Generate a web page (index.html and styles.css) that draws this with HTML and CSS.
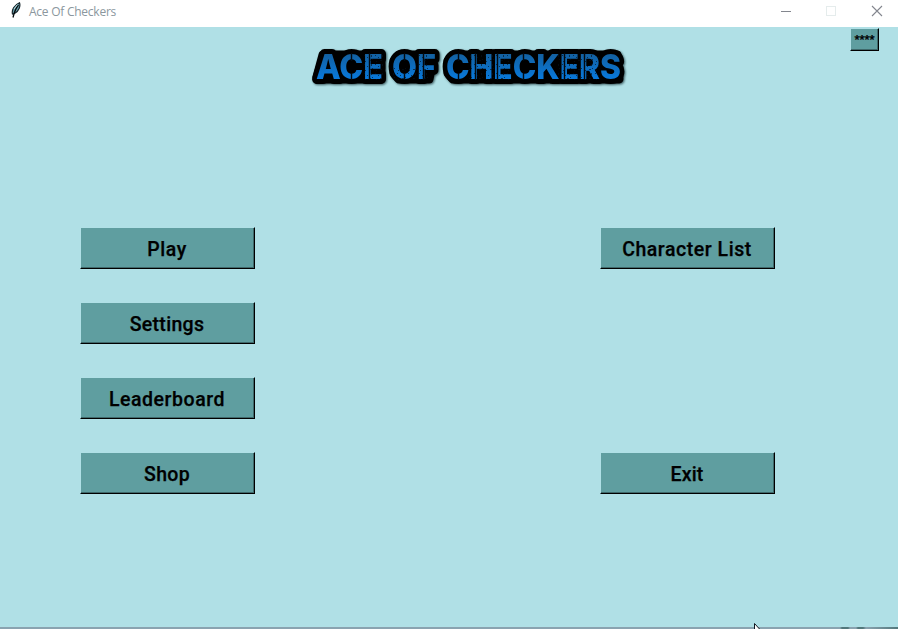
FILE: index.html
```html
<!DOCTYPE html>
<html lang="en">
<head>
<meta charset="utf-8">
<title>Ace Of Checkers</title>
<link rel="stylesheet" href="styles.css">
</head>
<body>
<header class="titlebar">
  <svg class="feather" width="12" height="17" viewBox="0 0 12 17">
    <path d="M2.500 12C1.500 8 4 3 9.500 .7C10.700 4 9 9 4.500 11.500Z" fill="#679da9" stroke="#17252b" stroke-width="1.2"/>
    <path d="M8.500 3Q5 7 3 15.500" fill="none" stroke="#050b0e" stroke-width="1.300"/>
    <path d="M4 7L7.500 2.500" stroke="#b6dce2"/>
  </svg>
  <span class="caption">Ace Of Checkers</span>
  <svg class="controls" width="106" height="14" viewBox="0 0 106 14" fill="none">
    <path d="M1 7.500H11" stroke="#83868e"/>
    <rect x="46.500" y="2.500" width="9" height="9" stroke="#e5ecec"/>
    <path d="M92 2L102 12M102 2L92 12" stroke="#83868e" stroke-width="1.100"/>
  </svg>
</header>
<main class="window">
  <svg class="logo" width="330" height="50" viewBox="305 42 330 50">
    <defs>
      <linearGradient id="blue" x1="0" y1="54" x2="0" y2="79" gradientUnits="userSpaceOnUse">
        <stop offset="0" stop-color="#1360a0"/><stop offset="1" stop-color="#0879dc"/>
      </linearGradient>
      <pattern id="grit" width="11" height="9" patternUnits="userSpaceOnUse">
        <path d="M1 1h1v1h-1zM4 3h1v1h-1zM8 1h1v2h-1zM6 6h2v1h-2zM2 7h1v1h-1zM9 5h1v1h-1z" fill="#04111c" opacity=".65"/>
      </pattern>
    </defs>
    <g class="logo-text">
      <path class="outline" d="M323 55H381V79H318L317 77ZM399 55H434L429 79H399L394 73V61ZM453 55H617L619 79H453L448 73V61Z"/>
      <g class="letters">
        <text x="316" y="79" textLength="67" lengthAdjust="spacingAndGlyphs">ACE</text>
        <text x="392" y="79" textLength="44" lengthAdjust="spacingAndGlyphs">OF</text>
        <text x="446" y="79" textLength="175" lengthAdjust="spacingAndGlyphs">CHECKERS</text>
      </g>
    </g>
    <path class="cuts" d="M351.500 53V61M351.500 73V80M369.500 53V80M404.500 53V61M404.500 73V80M423.500 53V80M458.500 53V61M458.500 73V80M475.500 53V80M497.500 53V80M523.500 53V61M523.500 73V80M564.500 53V80M584.500 53V80"/>
    <path d="M363 54H383V80H363ZM393 68H416V80H393ZM417 54H430V80H417ZM469 54H510V80H469ZM558 54H599V80H558Z" fill="url(#grit)"/>
  </svg>
  <button class="key key-small">****</button>
  <nav class="menu">
    <button class="key play">Play</button>
    <button class="key list">Character List</button>
    <button class="key settings">Settings</button>
    <button class="key board">Leaderboard</button>
    <button class="key shop">Shop</button>
    <button class="key exit">Exit</button>
  </nav>
</main>
<footer class="edge"></footer>
<svg class="cursor" width="12" height="19" viewBox="0 0 12 19"><path d="M.5 .5V16L4 12.500L7 18L9 17L6.500 12H11Z" fill="#fff" stroke="#101820"/></svg>
</body>
</html>
```
FILE: styles.css
```css
* { box-sizing: border-box; }
html, body { margin: 0; height: 629px; overflow: hidden; }
body {
  display: flex;
  flex-direction: column;
  position: relative;
  background: #b0e0e6;
  font-family: Roboto, "Liberation Sans", sans-serif;
}
.titlebar {
  flex: 0 0 27px;
  display: flex;
  align-items: flex-start;
  padding: 0 12px 0 10px;
  background: #fff;
}
.feather { margin-top: 2px; }
.caption {
  margin-left: 7px;
  font: 12px/24px "Open Sans", "Noto Sans", sans-serif;
  letter-spacing: -0.25px;
  color: #8b979e;
}
.controls { margin: 4px 0 0 auto; }
.window {
  flex: 1;
  display: grid;
  grid-template-columns: 305px 330px 1fr;
  grid-template-rows: 200px 1fr;
  align-items: start;
}
.logo { grid-column: 2; margin-top: 15px; overflow: visible; }
.logo-text { filter: drop-shadow(1px 1px 1px rgba(20, 45, 50, .75)); }
.outline { fill: #000; stroke: #000; stroke-width: 9px; stroke-linejoin: round; }
.letters {
  font: 800 34.5px Inter, sans-serif;
  fill: url(#blue);
  stroke: #000;
  stroke-width: 10px;
  stroke-linejoin: round;
  paint-order: stroke;
}
.cuts { fill: none; stroke: #020a12; stroke-width: 1.4px; }
.key {
  width: 175px;
  height: 42px;
  margin: 0;
  padding: 3px 1px 0 0;
  border: 1px solid;
  border-color: #b0e0e6 #000 #000 #b0e0e6;
  box-shadow: inset -1px -1px #3f696b;
  background: #5f9ea0;
  color: #000;
  font: 500 19.5px Roboto, sans-serif;
  -webkit-text-stroke: .25px #000;
  letter-spacing: .55px;
}
.key-small {
  width: 29px;
  height: 23px;
  margin: 1px 19px 0 0;
  padding: 0;
  justify-self: end;
  font-size: 11px;
  font-weight: 700;
  letter-spacing: 0;
}
.menu {
  grid-column: 1 / -1;
  display: grid;
  grid-template-columns: 175px 175px;
  grid-auto-rows: 42px;
  gap: 33px 345px;
  padding-left: 80px;
}
.settings, .board, .shop { grid-column: 1; }
.settings, .shop { letter-spacing: .3px; }
.exit { letter-spacing: .2px; }
.edge { flex: 0 0 2px; background: linear-gradient(90deg, #8aa3b0 840px, #52777b 842px, #52777b 848px, #8aa3b0 850px, #8aa3b0 856px, #52777b 858px, #52777b 863px, #8aa3b0 866px, #52777b); }
.cursor { position: absolute; left: 754px; top: 623px; }
```
